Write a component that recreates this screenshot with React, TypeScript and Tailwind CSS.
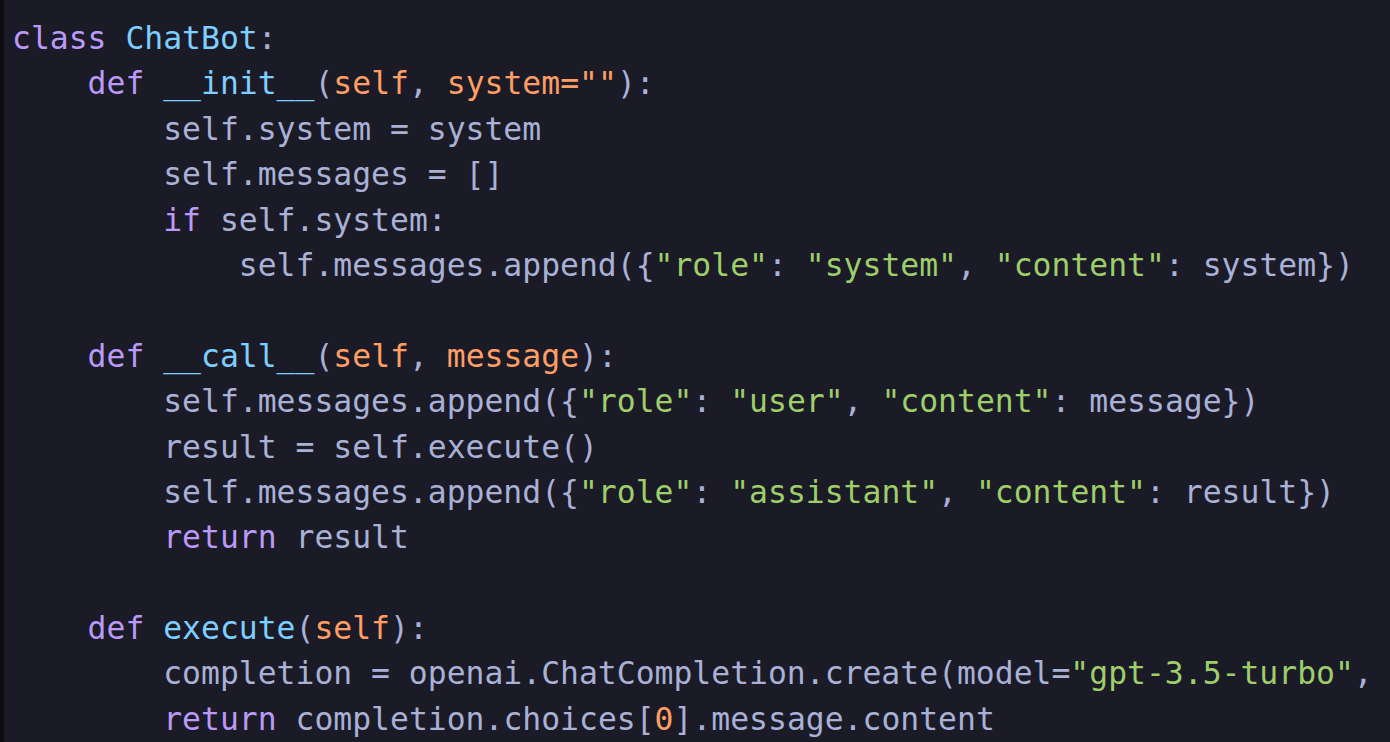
type Tok = [string, string?];

const K = 'text-[#bb9af7]';
const F = 'text-[#7dcfff]';
const P = 'text-[#ff9e64]';
const S = 'text-[#9ece6a]';

const lines: Tok[][] = [
  [['class', K], [' '], ['ChatBot', F], [':']],
  [['    '], ['def', K], [' '], ['__init__', F], ['('], ['self', P], [', '], ['system', P], ['=', P], ['""', P], ['):']],
  [['        self.system = system']],
  [['        self.messages = []']],
  [['        '], ['if', K], [' self.system:']],
  [['            self.messages.append({'], ['"role"', S], [': '], ['"system"', S], [', '], ['"content"', S], [': system})']],
  [['']],
  [['    '], ['def', K], [' '], ['__call__', F], ['('], ['self', P], [', '], ['message', P], ['):']],
  [['        self.messages.append({'], ['"role"', S], [': '], ['"user"', S], [', '], ['"content"', S], [': message})']],
  [['        result = self.execute()']],
  [['        self.messages.append({'], ['"role"', S], [': '], ['"assistant"', S], [', '], ['"content"', S], [': result})']],
  [['        '], ['return', K], [' result']],
  [['']],
  [['    '], ['def', K], [' '], ['execute', F], ['('], ['self', P], ['):']],
  [['        completion = openai.ChatCompletion.create(model='], ['"gpt-3.5-turbo"', S], [',']],
  [['        '], ['return', K], [' completion.choices['], ['0', P], ['].message.content']],
];

export default function App() {
  return (
    <div className="flex h-[742px] w-[1390px] overflow-hidden bg-[#1a1b26]">
      <div className="w-[4px] shrink-0 bg-[#0e0e12]" />
      <pre
        className="flex-1 overflow-hidden pl-[8px] pt-[16px] text-[31.4px] leading-[45.4px] text-[#a9b1d6]"
        style={{ fontFamily: '"DejaVu Sans Mono", "Liberation Mono", monospace' }}
      >
        {lines.map((line, i) => (
          <div key={i} className="h-[45.4px] whitespace-pre">
            {line.map(([text, cls], j) => (
              <span key={j} className={cls}>
                {text}
              </span>
            ))}
          </div>
        ))}
      </pre>
    </div>
  );
}
